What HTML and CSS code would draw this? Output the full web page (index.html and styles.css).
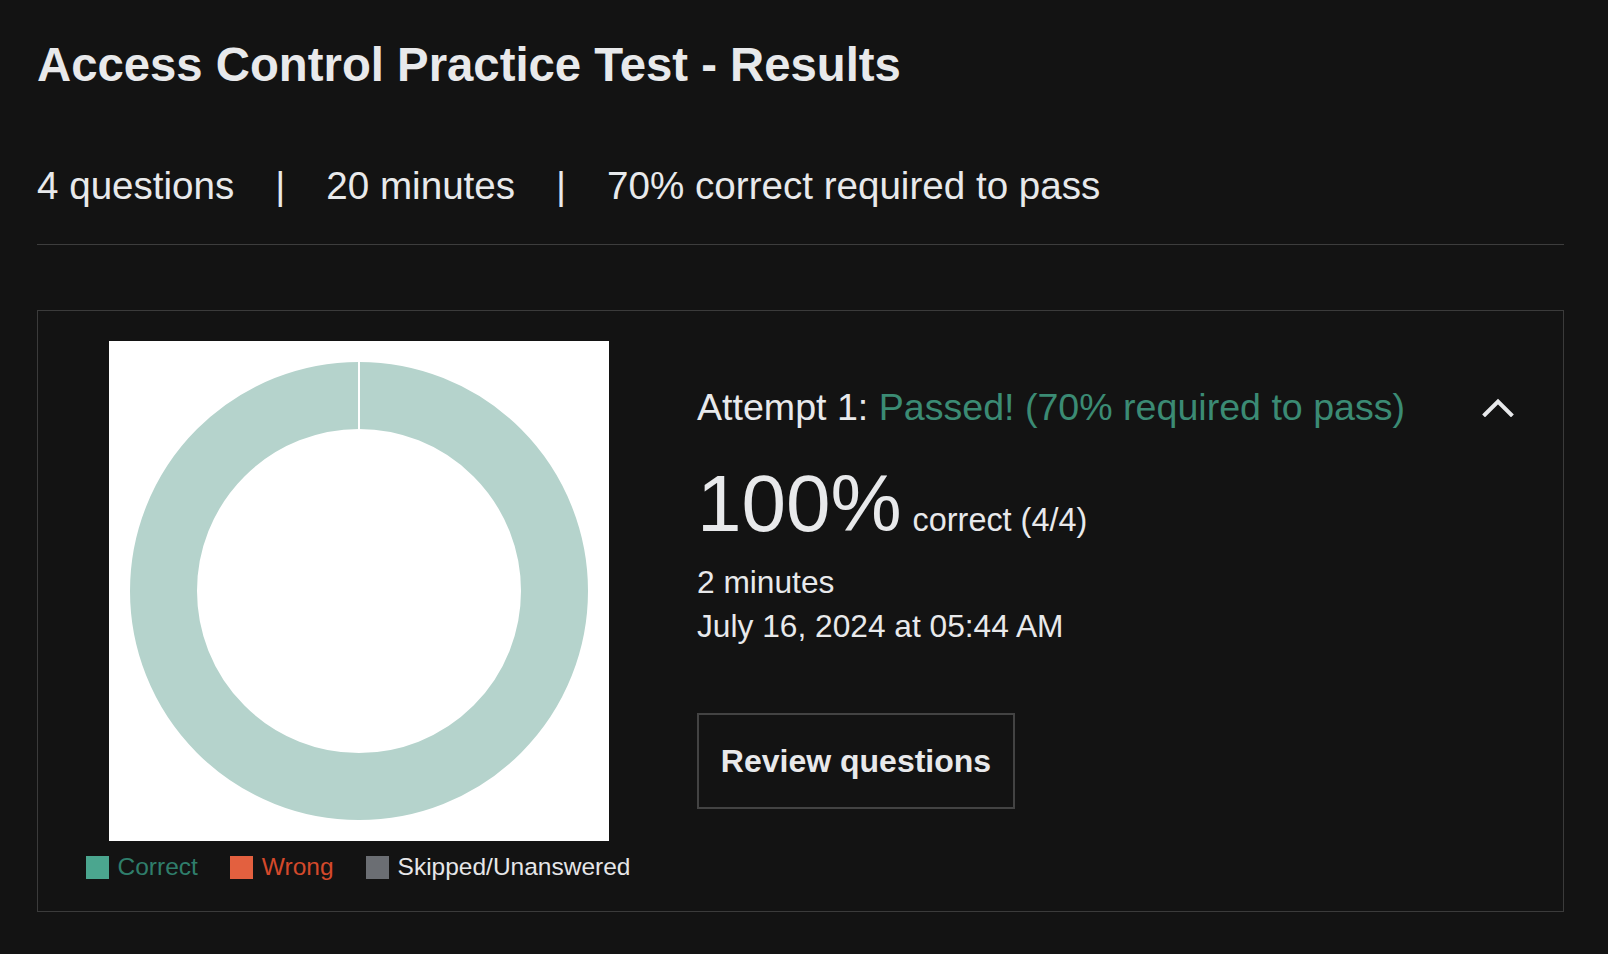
FILE: index.html
```html
<!DOCTYPE html>
<html lang="en">
<head>
<meta charset="utf-8">
<title>Access Control Practice Test - Results</title>
<link rel="stylesheet" href="styles.css">
</head>
<body>
<main class="page">
  <h1 class="title">Access Control Practice Test - Results</h1>
  <div class="meta">
    <span>4 questions</span>
    <span class="pipe">|</span>
    <span>20 minutes</span>
    <span class="pipe">|</span>
    <span>70% correct required to pass</span>
  </div>
  <hr class="divider">
  <section class="card">
    <div class="chart-col">
      <div class="chart">
        <svg width="500" height="500" viewBox="0 0 500 500">
          <rect x="0" y="0" width="500" height="500" fill="#ffffff"/>
          <circle cx="250" cy="250" r="195.5" fill="none" stroke="#b5d3cc" stroke-width="67"/>
          <rect x="249" y="20" width="2" height="69" fill="#ffffff"/>
        </svg>
      </div>
      <div class="legend">
        <div class="legend-item"><span class="swatch swatch-correct"></span><span class="lbl lbl-correct">Correct</span></div>
        <div class="legend-item"><span class="swatch swatch-wrong"></span><span class="lbl lbl-wrong">Wrong</span></div>
        <div class="legend-item"><span class="swatch swatch-skip"></span><span class="lbl lbl-skip">Skipped/Unanswered</span></div>
      </div>
    </div>
    <div class="info-col">
      <div class="attempt-row">
        <div class="attempt">Attempt 1: <span class="passed">Passed! (70% required to pass)</span></div>
        <svg class="chevron" width="32" height="19" viewBox="0 0 32 19">
          <path d="M3 16.5 L16 3.5 L29 16.5" fill="none" stroke="#e8e9eb" stroke-width="4" stroke-linecap="square"/>
        </svg>
      </div>
      <div class="score">
        <span class="pct">100%</span>
        <span class="score-sub">correct (4/4)</span>
      </div>
      <div class="detail">2 minutes</div>
      <div class="detail">July 16, 2024 at 05:44 AM</div>
      <button class="review">Review questions</button>
    </div>
  </section>
</main>
</body>
</html>
```

FILE: styles.css
```css
* { box-sizing: border-box; }

html, body {
  margin: 0;
  padding: 0;
  background: #131313;
}

body {
  font-family: "Liberation Sans", Arial, sans-serif;
  color: #e8e9eb;
}

.page {
  padding: 37px 44px 0 37px;
}

.title {
  margin: 0;
  font-size: 47.3px;
  line-height: 56px;
  font-weight: 700;
  color: #e8e9eb;
}

.meta {
  display: flex;
  align-items: baseline;
  margin-top: 71px;
  font-size: 38.6px;
  line-height: 44px;
}

.pipe {
  margin: 0 41px;
}

.divider {
  margin: 36px 0 0 0;
  border: 0;
  height: 1px;
  background: #3d3d3d;
}

.card {
  margin-top: 65px;
  border: 1px solid #3b3b3b;
  display: flex;
  align-items: flex-start;
  padding: 30px 0 32px 48px;
}

.chart-col {
  width: 546px;
  display: flex;
  flex-direction: column;
  align-items: center;
  flex-shrink: 0;
}

.chart {
  width: 500px;
  height: 500px;
}

.chart svg { display: block; }

.legend {
  margin-top: 14px;
  margin-left: -2px;
  display: flex;
  gap: 32px;
  height: 24px;
  font-size: 24.5px;
  line-height: 24px;
}

.legend-item {
  display: flex;
  align-items: center;
  gap: 9px;
}

.swatch {
  display: block;
  width: 23px;
  height: 23px;
}

.swatch-correct { background: #4ba68f; }
.swatch-wrong { background: #e3603f; }
.swatch-skip { background: #6b6e73; }

.lbl-correct { color: #2f7e6b; }
.lbl-wrong { color: #d4492b; }
.lbl-skip { color: #e6e6e8; }

.info-col {
  flex: 1;
  margin-left: 65px;
  margin-top: 44px;
  padding-right: 49px;
}

.attempt-row {
  display: flex;
  align-items: center;
  justify-content: space-between;
  height: 44px;
}

.attempt {
  font-size: 37.6px;
  line-height: 44px;
}

.passed { color: #3b8b74; }

.chevron { display: block; margin-top: 0; }

.score {
  display: flex;
  align-items: baseline;
  margin-top: 35px;
  line-height: 80px;
}

.pct {
  font-size: 80px;
  line-height: 80px;
}

.score-sub {
  margin-left: 11px;
  font-size: 32.4px;
}

.detail {
  font-size: 31.7px;
  line-height: 44px;
}

.review {
  display: flex;
  align-items: center;
  justify-content: center;
  margin-top: 65px;
  width: 318px;
  height: 96px;
  padding: 0;
  background: transparent;
  border: 2px solid #434343;
  color: #e8e9eb;
  font-family: "Liberation Sans", Arial, sans-serif;
  font-size: 32px;
  font-weight: 700;
}
```
